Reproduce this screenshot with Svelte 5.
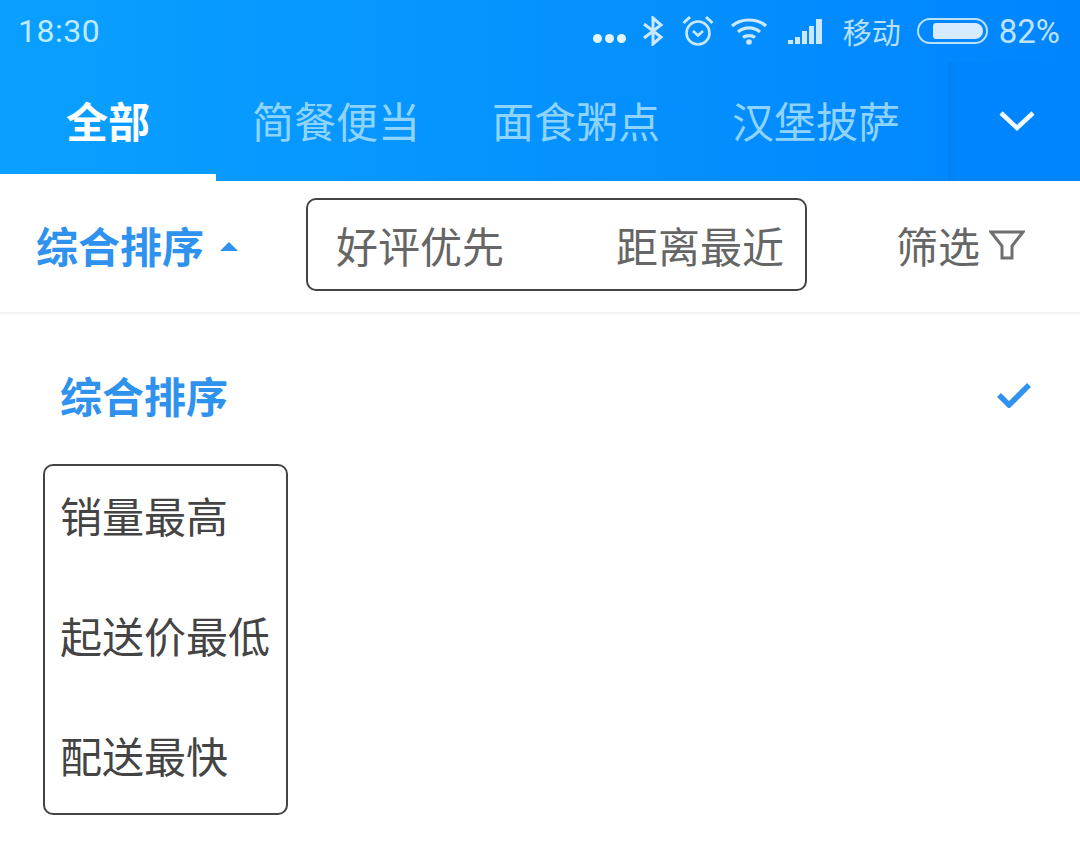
<script>
	const tabs = ["简餐便当", "面食粥点", "汉堡披萨"];
	const options = ["销量最高", "起送价最低", "配送最快"];
</script>

<div class="page">
	<header class="top">
		<div class="status">
			<span class="time">18:30</span>
			<div class="status_right">
				<span class="dots"><i></i><i></i><i></i></span>
				<svg class="bt" width="22" height="30" viewBox="0 0 22 30" fill="none" stroke="currentColor" stroke-width="3">
					<path d="M2 8 L19 21 L11 28 V2 L19 9 L2 22" />
				</svg>
				<svg class="alarm" width="32" height="32" viewBox="0 0 32 32" fill="none" stroke="currentColor" stroke-width="2.6">
					<circle cx="16" cy="18" r="11.5" />
					<path d="M11 16 L16 20.5 L21 16" />
					<path d="M1.5 8 L8 2 M30.5 8 L24 2" stroke-width="3" />
				</svg>
				<svg class="wifi" width="38" height="28" viewBox="0 0 38 28" fill="none" stroke="currentColor" stroke-width="3.2">
					<path d="M2 9 C11 1 27 1 36 9" />
					<path d="M8 15 C14 9.500 24 9.500 30 15" />
					<path d="M13 20.500 C16 18 22 18 25 20.500" />
					<circle cx="19" cy="25" r="2.8" fill="currentColor" stroke="none" />
				</svg>
				<svg class="signal" width="38" height="26" viewBox="0 0 38 26" fill="currentColor">
					<rect x="1" y="21" width="5" height="4" />
					<rect x="8" y="18" width="5" height="7" />
					<rect x="15" y="12" width="5" height="13" />
					<rect x="22" y="7" width="5" height="18" />
					<rect x="29" y="0" width="6" height="25" />
				</svg>
				<span class="carrier">移动</span>
				<div class="battery"><div class="level"></div></div>
				<span class="pct">82%</span>
			</div>
		</div>
		<nav class="tabs">
			<div class="tab active">全部</div>
			{#each tabs as tab}
				<div class="tab">{tab}</div>
			{/each}
			<div class="more">
				<svg width="36" height="22" viewBox="0 0 36 22" fill="none" stroke="#f2faff" stroke-width="4.5">
					<path d="M2 3 L18 18 L34 3" />
				</svg>
			</div>
		</nav>
	</header>

	<div class="filter">
		<div class="sort">
			<span>综合排序</span>
			<span class="caret"></span>
		</div>
		<div class="boxed">
			<span>好评优先</span>
			<span>距离最近</span>
		</div>
		<div class="screen">
			<span>筛选</span>
			<svg width="36" height="32" viewBox="0 0 36 32" fill="none" stroke="#707070" stroke-width="3">
				<path d="M2 3 H34 L23 17 V29 H13 V17 Z" />
			</svg>
		</div>
	</div>

	<div class="list">
		<div class="current">
			<span>综合排序</span>
			<svg width="34" height="26" viewBox="0 0 34 26" fill="none" stroke="#2f92ee" stroke-width="5.5">
				<path d="M2 13 L12 23 L32 3" />
			</svg>
		</div>
		<div class="option_box">
			{#each options as option}
				<div class="option">{option}</div>
			{/each}
		</div>
	</div>
</div>

<style>
	:global(body) {
		margin: 0;
		background: #fff;
	}
	.page {
		width: 1080px;
		height: 842px;
		overflow: hidden;
		font-family: "Noto Sans CJK SC", "Noto Sans", sans-serif;
	}
	.top {
		height: 181px;
		background: linear-gradient(90deg, #0aa0ff, #0085fe);
		color: #8fd3ff;
		display: flex;
		flex-direction: column;
	}
	.status {
		height: 62px;
		display: flex;
		align-items: center;
		justify-content: space-between;
		padding: 0 20px 0 18px;
	}
	.time {
		font-family: Roboto, sans-serif;
		font-size: 32px;
		color: #bfeaff;
		letter-spacing: 0.5px;
	}
	.status_right {
		display: flex;
		align-items: center;
		color: #cbe8ff;
	}
	.dots {
		display: flex;
		gap: 3px;
		margin-right: 16px;
		margin-top: 14px;
	}
	.dots i {
		width: 9px;
		height: 9px;
		border-radius: 50%;
		background: #e4f4ff;
	}
	.bt {
		margin-right: 18px;
	}
	.alarm {
		margin-right: 16px;
	}
	.wifi {
		margin-right: 19px;
	}
	.signal {
		margin-right: 18px;
		margin-top: 2px;
	}
	.carrier {
		font-size: 29px;
		margin-right: 16px;
		color: #b9e0ff;
	}
	.battery {
		width: 71px;
		height: 26px;
		box-sizing: border-box;
		border: 2px solid #b9e0ff;
		border-radius: 13px;
		padding: 3px;
		margin-right: 11px;
		display: flex;
		justify-content: flex-end;
	}
	.level {
		width: 50px;
		height: 16px;
		background: #d6ebff;
		border-radius: 3px 8px 8px 3px;
	}
	.pct {
		font-family: Roboto, sans-serif;
		font-size: 33px;
		color: #bfe3ff;
	}
	.tabs {
		flex: 1;
		display: flex;
	}
	.tab {
		width: 240px;
		box-sizing: border-box;
		padding-top: 28px;
		text-align: center;
		font-size: 42px;
		line-height: 60px;
	}
	.tab.active {
		width: 216px;
		height: 112px;
		box-sizing: content-box;
		padding-top: 0;
		color: #fff;
		font-weight: 700;
		border-bottom: 7px solid #fff;
		margin-bottom: -7px;
		line-height: 116px;
	}
	.more {
		margin-left: auto;
		width: 132px;
		display: flex;
		align-items: center;
		justify-content: center;
		padding-left: 6px;
		padding-bottom: 2px;
		box-sizing: border-box;
		background: linear-gradient(90deg, #0082f4, #0085fe 12px);
	}
	.filter {
		height: 133px;
		box-sizing: border-box;
		border-bottom: 2px solid #f3f3f3;
		display: flex;
		align-items: center;
		font-size: 42px;
		color: #666;
		padding-left: 36px;
	}
	.sort {
		width: 270px;
		color: #2f92ee;
		font-weight: 700;
		display: flex;
		align-items: center;
		gap: 16px;
		margin-bottom: 4px;
	}
	.caret {
		width: 0;
		height: 0;
		margin-top: 3px;
		border-left: 9px solid transparent;
		border-right: 9px solid transparent;
		border-bottom: 9px solid #2f92ee;
	}
	.boxed {
		width: 501px;
		height: 93px;
		box-sizing: border-box;
		border: 2px solid #444;
		border-radius: 10px;
		display: flex;
		align-items: center;
		justify-content: space-between;
		padding: 0 21px 0 28px;
		margin-bottom: 5px;
	}
	.screen {
		margin-left: 89px;
		display: flex;
		align-items: center;
		gap: 9px;
		margin-bottom: 4px;
	}
	.list {
		padding: 0 0 0 43px;
	}
	.current {
		height: 150px;
		display: flex;
		align-items: center;
		justify-content: space-between;
		box-sizing: border-box;
		padding: 11px 49px 0 17px;
		font-size: 42px;
		font-weight: 700;
		color: #2f92ee;
	}
	.option_box {
		width: 245px;
		height: 351px;
		box-sizing: border-box;
		border: 2px solid #444;
		border-radius: 10px;
		padding: 0 0 10px 15px;
		display: flex;
		flex-direction: column;
		justify-content: center;
		font-size: 42px;
		color: #444;
	}
	.option {
		height: 120px;
		line-height: 120px;
		white-space: nowrap;
	}
</style>
